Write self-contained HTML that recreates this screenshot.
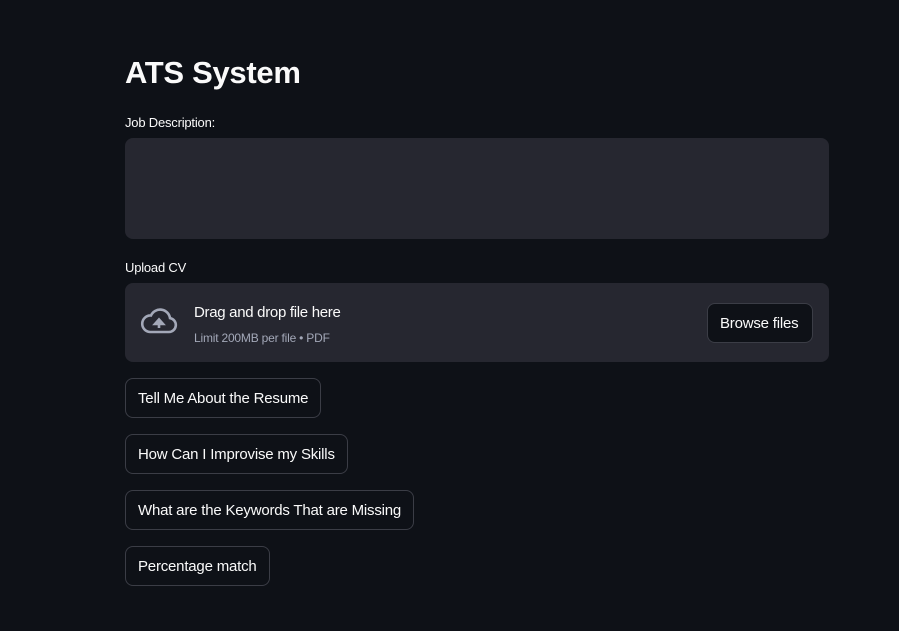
<!DOCTYPE html>
<html><head><meta charset="utf-8"><style>
*{box-sizing:border-box;margin:0;padding:0}
body{width:899px;height:631px;background:#0e1117;color:#fafafa;font-family:"Liberation Sans",sans-serif;position:relative;overflow:hidden}
.a{position:absolute}
h1{position:absolute;left:125px;top:55px;font-size:31px;font-weight:bold;letter-spacing:-0.3px}
.lbl{font-size:13px;color:#fafafa;letter-spacing:-0.2px}
.ta{left:125px;top:138px;width:704px;height:101px;background:#262730;border-radius:8px}
.up{left:125px;top:283px;width:704px;height:79px;background:#262730;border-radius:8px}
.btn{position:absolute;left:125px;height:40px;border:1px solid #3b3d46;border-radius:8px;background:#0e1117;font-size:15px;letter-spacing:-0.2px;color:#fafafa;padding:0 12px;line-height:40px;white-space:nowrap}
</style></head><body>
<h1>ATS System</h1>
<div class="a lbl" style="left:125px;top:115px">Job Description:</div>
<div class="a ta"></div>
<div class="a lbl" style="left:125px;top:260px">Upload CV</div>
<div class="a up">
<svg class="a" style="left:15px;top:24px" width="38" height="30" viewBox="0 0 38 30"><path d="M10 25 H29 a7 7 0 0 0 1-13.9 A10 10 0 0 0 11 8.5 A8 8 0 0 0 10 25Z" fill="none" stroke="#a3a8b8" stroke-width="2.6"/><path d="M19 21 V14 M15 17 L19 12.5 L23 17Z" stroke="#a3a8b8" stroke-width="2.6" fill="#a3a8b8"/></svg>
<div class="a" style="left:69px;top:21px;font-size:15px;letter-spacing:-0.3px">Drag and drop file here</div>
<div class="a" style="left:69px;top:48px;font-size:12px;color:#a3a8b8;letter-spacing:-0.2px">Limit 200MB per file • PDF</div>
<div class="btn" style="left:582px;top:20px;height:40px;width:106px">Browse files</div>
</div>
<div class="btn" style="top:378px">Tell Me About the Resume</div>
<div class="btn" style="top:434px">How Can I Improvise my Skills</div>
<div class="btn" style="top:490px">What are the Keywords That are Missing</div>
<div class="btn" style="top:546px">Percentage match</div>
</body></html>
